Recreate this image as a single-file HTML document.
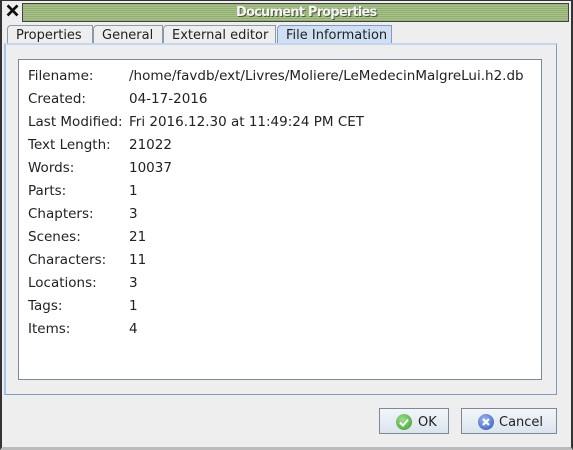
<!DOCTYPE html>
<html><head><style>
*{margin:0;padding:0;box-sizing:border-box}
body{width:573px;height:450px;background:#eeeeee;position:relative;overflow:hidden;font-family:"DejaVu Sans","Liberation Sans",sans-serif;font-size:13.5px;color:#222}
.win{position:absolute;left:0;top:0;width:573px;height:450px;border-left:2px solid #333;border-right:2px solid #333;border-bottom:3px solid #bbb;border-top:1px solid #333;background:#eeeeee}
.title{position:absolute;left:22px;top:3px;width:547px;height:19px;border:1px solid #444;background:repeating-linear-gradient(180deg,#8fae6f 0 1px,#a9c38a 1px 2px);}
.title span{position:absolute;left:213px;top:0;font-weight:bold;font-size:13px;letter-spacing:-0.8px;color:#f4f4f4;text-shadow:1px 1px 0 #4a5a3a;line-height:18px}
.x{position:absolute;left:5px;top:3px;font-size:18px;font-weight:bold;line-height:18px;color:#111;-webkit-text-stroke:1px #111}
.tab{position:absolute;top:25px;height:18px;border:1px solid #8a9aaa;border-bottom:none;background:#eeeeee;line-height:19px;padding-left:8px;border-radius:4px 0 0 0;font-size:13px}
.tab.sel{background:#cfe0f3;border-color:#7d9cc4;top:25px;height:19px}
.panel{position:absolute;left:4px;top:43px;width:553px;height:352px;border:1px solid #7d9cc4;border-top:2px solid #c5d7ee;border-left:2px solid #a8c4ea;background:#eeeeee}
.box{position:absolute;left:18px;top:59px;width:524px;height:321px;background:#fff;border:1px solid #7b8a99}
.row{position:absolute;left:28px;height:16px;line-height:16px;white-space:nowrap}
.row b{font-weight:normal;position:absolute;left:101px}
.btn{position:absolute;top:408px;height:26px;border:1px solid #7b8a99;background:linear-gradient(#f3f6fa,#dbe4ee);line-height:27px;font-size:13px}
.ic{position:absolute;top:5px;left:16px;width:16px;height:16px;border-radius:50%}
</style></head><body>
<div class="win"></div>
<div class="x">✕</div>
<div class="title"><span>Document Properties</span></div>
<div class="tab" style="left:7px;width:86px">Properties</div>
<div class="tab" style="left:93px;width:70px">General</div>
<div class="tab" style="left:163px;width:113px">External editor</div>
<div class="tab sel" style="left:277px;width:115px">File Information</div>
<div class="panel"></div>
<div class="box"></div>
<div class="row" style="top:68px">Filename:<b>/home/favdb/ext/Livres/Moliere/LeMedecinMalgreLui.h2.db</b></div>
<div class="row" style="top:91px">Created:<b>04-17-2016</b></div>
<div class="row" style="top:114px">Last Modified:<b>Fri 2016.12.30 at 11:49:24 PM CET</b></div>
<div class="row" style="top:137px">Text Length:<b>21022</b></div>
<div class="row" style="top:160px">Words:<b>10037</b></div>
<div class="row" style="top:183px">Parts:<b>1</b></div>
<div class="row" style="top:206px">Chapters:<b>3</b></div>
<div class="row" style="top:229px">Scenes:<b>21</b></div>
<div class="row" style="top:252px">Characters:<b>11</b></div>
<div class="row" style="top:275px">Locations:<b>3</b></div>
<div class="row" style="top:298px">Tags:<b>1</b></div>
<div class="row" style="top:321px">Items:<b>4</b></div>
<div class="btn" style="left:379px;width:70px"><div class="ic" style="background:radial-gradient(circle at 40% 35%,#9be08a,#3a9a2a)"></div><svg style="position:absolute;left:19px;top:9px" width="10" height="9"><path d="M1 4.5 L4 7.5 L9 1.5" stroke="#fff" stroke-width="2" fill="none"/></svg><span style="position:absolute;left:38px">OK</span></div>
<div class="btn" style="left:461px;width:96px"><div class="ic" style="background:radial-gradient(circle at 40% 35%,#9ab6f0,#2f55b8)"></div><svg style="position:absolute;left:19px;top:8px" width="10" height="10"><path d="M2 2 L8 8 M8 2 L2 8" stroke="#fff" stroke-width="2.2"/></svg><span style="position:absolute;left:37px">Cancel</span></div>
</body></html>
